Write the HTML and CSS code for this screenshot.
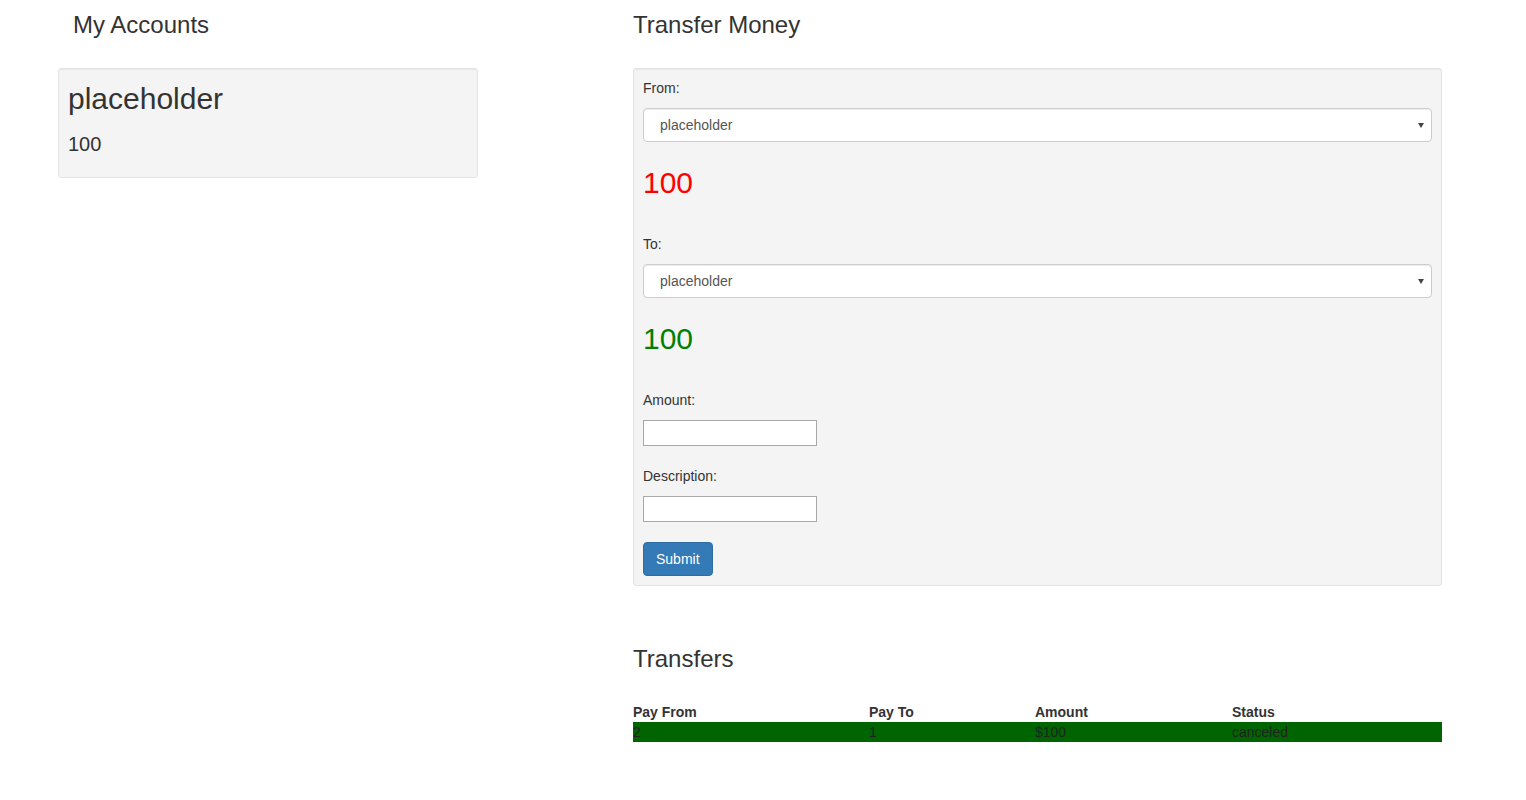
FILE: index.html
```html
<!DOCTYPE html>
<html lang="en">
<head>
<meta charset="utf-8">
<title>Accounts</title>
<link rel="stylesheet" href="styles.css">
</head>
<body>
<div class="page">
  <section class="col-left">
    <h3 class="page-title indent">My Accounts</h3>
    <div class="well">
      <h2 class="acct-name">placeholder</h2>
      <h4 class="acct-balance">100</h4>
    </div>
  </section>
  <section class="col-right">
    <h3 class="page-title">Transfer Money</h3>
    <form class="well transfer-form">
      <label class="field-label" for="from">From:</label>
      <div class="select-wrap"><select id="from" class="form-control"><option>placeholder</option></select></div>
      <h2 class="balance balance-from">100</h2>
      <label class="field-label" for="to">To:</label>
      <div class="select-wrap"><select id="to" class="form-control"><option>placeholder</option></select></div>
      <h2 class="balance balance-to">100</h2>
      <label class="field-label" for="amount">Amount:</label>
      <input id="amount" class="plain-input" type="text">
      <label class="field-label spaced" for="desc">Description:</label>
      <input id="desc" class="plain-input" type="text">
      <button type="button" class="btn-primary">Submit</button>
    </form>
    <h3 class="page-title transfers-title">Transfers</h3>
    <table class="transfers">
      <thead>
        <tr><th class="c-from">Pay From</th><th class="c-to">Pay To</th><th class="c-amt">Amount</th><th>Status</th></tr>
      </thead>
      <tbody>
        <tr class="row-done"><td>2</td><td>1</td><td>$100</td><td>canceled</td></tr>
      </tbody>
    </table>
  </section>
</div>
</body>
</html>
```

FILE: styles.css
```css
* { box-sizing: border-box; }

html, body {
  margin: 0;
  padding: 0;
  background: #fff;
}

body {
  font-family: "Liberation Sans", Arial, Helvetica, sans-serif;
  font-size: 14px;
  line-height: 20px;
  color: #333;
}

.page {
  display: flex;
  align-items: flex-start;
  padding-left: 58px;
}

.col-left {
  width: 420px;
  flex: none;
}

.col-right {
  width: 809px;
  flex: none;
  margin-left: 155px;
}

.page-title {
  font-size: 24px;
  font-weight: 500;
  line-height: 26px;
  margin: 12px 0 30px;
}

.indent { padding-left: 15px; }

.well {
  background: #f4f4f4;
  border: 1px solid #e3e3e3;
  border-radius: 3px;
  padding: 9px;
  box-shadow: inset 0 1px 1px rgba(0, 0, 0, 0.05);
}

.acct-name {
  font-size: 30px;
  font-weight: 500;
  line-height: 33px;
  margin: 4px 0 18px;
}

.acct-balance {
  font-size: 20px;
  font-weight: 500;
  line-height: 22px;
  margin: 0 0 13px;
}

.transfer-form {
  display: flex;
  flex-direction: column;
  align-items: flex-start;
}

.field-label {
  display: block;
  font-weight: normal;
  line-height: 20px;
  margin: 0 0 10px;
}

.field-label.spaced { margin-top: 20px; }

.select-wrap {
  position: relative;
  width: 100%;
}

.select-wrap::after {
  content: "";
  position: absolute;
  right: 8px;
  top: 15px;
  border-left: 3px solid transparent;
  border-right: 3px solid transparent;
  border-top: 5px solid #444;
  pointer-events: none;
}

.form-control {
  display: block;
  width: 100%;
  height: 34px;
  padding: 6px 12px 6px 16px;
  font-family: inherit;
  font-size: 14px;
  line-height: 20px;
  color: #555;
  background-color: #fff;
  border: 1px solid #ccc;
  border-radius: 4px;
  box-shadow: inset 0 1px 1px rgba(0, 0, 0, 0.075);
  -webkit-appearance: none;
  appearance: none;
}

.balance {
  font-size: 30px;
  font-weight: 500;
  line-height: 33px;
  margin: 24px 0 35px;
}

.balance-from { color: #ff0000; }
.balance-to { color: #008000; }

.plain-input {
  display: block;
  width: 174px;
  height: 26px;
  padding: 1px 2px;
  font-family: inherit;
  font-size: 14px;
  background: #fff;
  border: 1px solid #a9a9a9;
  border-radius: 0;
}

.btn-primary {
  margin-top: 20px;
  height: 34px;
  padding: 6px 12px;
  font-family: inherit;
  font-size: 14px;
  line-height: 20px;
  color: #fff;
  background-color: #337ab7;
  border: 1px solid #2e6da4;
  border-radius: 4px;
  cursor: pointer;
}

.transfers-title {
  margin-top: 60px;
  margin-bottom: 30px;
}

.transfers {
  width: 100%;
  border-collapse: collapse;
  border-spacing: 0;
}

.transfers th,
.transfers td {
  padding: 0;
  text-align: left;
  line-height: 20px;
}

.transfers th { font-weight: bold; }

.c-from { width: 236px; }
.c-to { width: 166px; }
.c-amt { width: 197px; }

.row-done { background-color: #006400; }
.row-done td { color: #222; }
```
